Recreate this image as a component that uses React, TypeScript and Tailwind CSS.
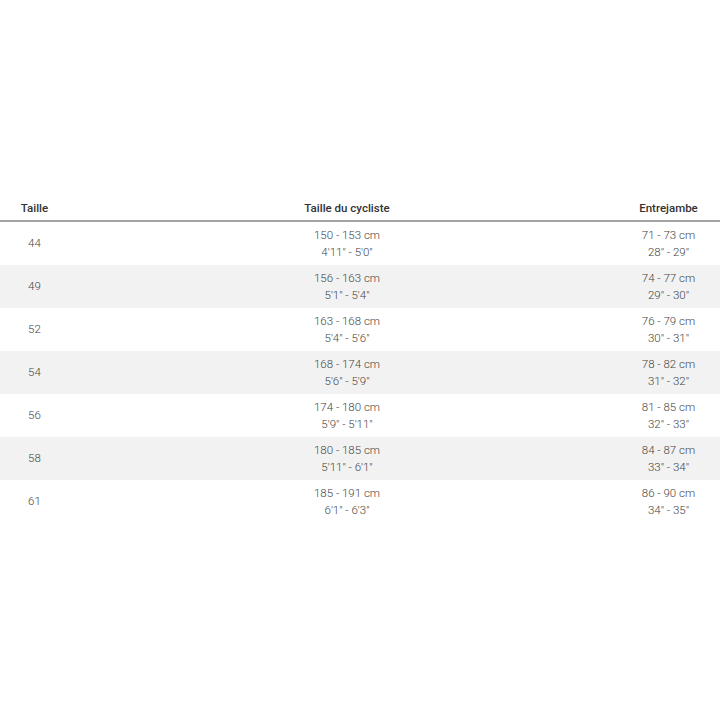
const rows = [
  { size: "44", rider: ["150 - 153 cm", "4'11\" - 5'0\""], inseam: ["71 - 73 cm", "28\" - 29\""] },
  { size: "49", rider: ["156 - 163 cm", "5'1\" - 5'4\""], inseam: ["74 - 77 cm", "29\" - 30\""] },
  { size: "52", rider: ["163 - 168 cm", "5'4\" - 5'6\""], inseam: ["76 - 79 cm", "30\" - 31\""] },
  { size: "54", rider: ["168 - 174 cm", "5'6\" - 5'9\""], inseam: ["78 - 82 cm", "31\" - 32\""] },
  { size: "56", rider: ["174 - 180 cm", "5'9\" - 5'11\""], inseam: ["81 - 85 cm", "32\" - 33\""] },
  { size: "58", rider: ["180 - 185 cm", "5'11\" - 6'1\""], inseam: ["84 - 87 cm", "33\" - 34\""] },
  { size: "61", rider: ["185 - 191 cm", "6'1\" - 6'3\""], inseam: ["86 - 90 cm", "34\" - 35\""] },
];

export default function App() {
  return (
    <div className="h-[720px] w-[720px] bg-white pt-[197px] font-['Roboto',sans-serif] text-[12px]">
      {/* Header */}
      <div className="grid h-[25px] grid-cols-[69px_556px_1fr] items-center border-b-2 border-[#a3a3a3] pr-[8px] text-[11.5px] font-medium text-[#333]">
        <div className="text-center">Taille</div>
        <div className="text-center">Taille du cycliste</div>
        <div className="text-center">Entrejambe</div>
      </div>
      {/* Rows */}
      {rows.map((row, i) => (
        <div
          key={row.size}
          className={
            "grid h-[43px] grid-cols-[69px_556px_1fr] items-center pr-[8px] text-[11.5px] font-light leading-[17px] text-[#444] " +
            (i % 2 === 1 ? "bg-[#f2f2f2]" : "bg-white")
          }
        >
          <div className="text-center">{row.size}</div>
          <div className="text-center">
            <div>{row.rider[0]}</div>
            <div>{row.rider[1]}</div>
          </div>
          <div className="text-center">
            <div>{row.inseam[0]}</div>
            <div>{row.inseam[1]}</div>
          </div>
        </div>
      ))}
    </div>
  );
}
